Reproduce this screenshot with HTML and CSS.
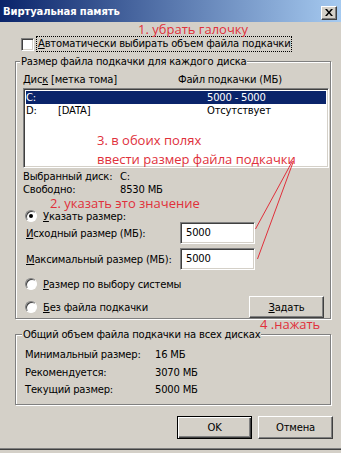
FILE: index.html
```html
<!DOCTYPE html>
<html lang="ru">
<head>
<meta charset="utf-8">
<title>Виртуальная память</title>
<link rel="stylesheet" href="styles.css">
</head>
<body>
<div class="window">
  <div class="titlebar">
    <span class="title">Виртуальная память</span>
    <span class="close"><svg width="8" height="7" viewBox="0 0 8 7"><path d="M0 0h2l2 2.5L6 0h2L5 3.5 8 7H6L4 4.5 2 7H0l3-3.5z" fill="#000"/></svg></span>
  </div>

  <div class="auto-row">
    <span class="checkbox"></span>
    <span class="focus"><u>А</u>втоматически выбирать объем файла подкачки</span>
  </div>

  <div class="group group-disks">
    <span class="legend">Размер файла подкачки для каждого диска</span>
    <div class="cols head"><span class="c1">Дис<u>к</u> [метка тома]</span><span class="c2">Файл подкачки (МБ)</span></div>
    <div class="listbox">
      <div class="lrow sel"><span class="d">C:</span><span class="lab"></span><span class="v">5000 - 5000</span></div>
      <div class="lrow"><span class="d">D:</span><span class="lab">[DATA]</span><span class="v">Отсутствует</span></div>
    </div>
    <div class="info">
      <div class="kv"><span class="k">Выбранный диск:</span><span>C:</span></div>
      <div class="kv"><span class="k">Свободно:</span><span>8530 МБ</span></div>
    </div>
    <div class="radio-row first"><span class="radio on"></span><span><u>У</u>казать размер:</span></div>
    <div class="size-row r1"><span class="size-label"><u>И</u>сходный размер (МБ):</span><span class="input">5000</span></div>
    <div class="size-row r2"><span class="size-label"><u>М</u>аксимальный размер (МБ):</span><span class="input">5000</span></div>
    <div class="radio-row sys"><span class="radio"></span><span><u>Р</u>азмер по выбору системы</span></div>
    <div class="radio-row none">
      <span class="radio"></span><span class="grow"><u>Б</u>ез файла подкачки</span>
      <span class="btn set"><u>З</u>адать</span>
    </div>
  </div>

  <div class="group group-total">
    <span class="legend">Общий объем файла подкачки на всех дисках</span>
    <div class="tv"><span class="tk">Минимальный размер:</span><span>16 МБ</span></div>
    <div class="tv"><span class="tk">Рекомендуется:</span><span>3070 МБ</span></div>
    <div class="tv"><span class="tk">Текущий размер:</span><span>5000 МБ</span></div>
  </div>

  <div class="buttons">
    <span class="btn default">OK</span>
    <span class="btn">Отмена</span>
  </div>
  <div class="frame-bottom"></div>

  <span class="note n1">1. убрать галочку</span>
  <span class="note n3">3. в обоих полях<br>ввести размер файла подкачки</span>
  <span class="note n2">2. указать это значение</span>
  <span class="note n4">4 .нажать</span>
  <svg class="lines" width="341" height="453" viewBox="0 0 341 453">
    <line x1="292.5" y1="161" x2="255.5" y2="229" stroke="#e0303b" stroke-width="1"/>
    <line x1="293.5" y1="161" x2="257.5" y2="259" stroke="#e0303b" stroke-width="1"/>
  </svg>
</div>
</body>
</html>
```

FILE: styles.css
```css
* { box-sizing: border-box; }
html, body { margin: 0; padding: 0; }
body {
  width: 341px;
  height: 453px;
  overflow: hidden;
  background: #d4d0c8;
  font-family: "DejaVu Sans", Tahoma, sans-serif;
  font-size: 10px;
  letter-spacing: -0.2px;
  color: #000;
}
u { text-decoration: underline; text-underline-offset: 1px; }
.window {
  position: relative;
  width: 341px;
  height: 453px;
  display: flex;
  flex-direction: column;
}
.titlebar {
  height: 22px;
  background: linear-gradient(to right, #0a246a, #a6caf0);
  display: flex;
  align-items: center;
  justify-content: space-between;
  padding: 0 4px 0 3px;
}
.title {
  color: #fff;
  font-weight: bold;
  font-size: 10px;
  letter-spacing: -0.1px;
}
.close {
  width: 16px;
  height: 14px;
  margin-top: 3px;
  background: #d4d0c8;
  border: 1px solid;
  border-color: #fff #404040 #404040 #fff;
  box-shadow: inset -1px -1px 0 #808080;
  display: flex;
  align-items: center;
  justify-content: center;
}
.auto-row {
  margin-top: 14px;
  height: 16px;
  padding-left: 21px;
  display: flex;
  align-items: center;
}
.checkbox {
  width: 13px;
  height: 13px;
  background: #fff;
  border: 1px solid;
  border-color: #808080 #fff #fff #808080;
  box-shadow: inset 1px 1px 0 #404040, inset -1px -1px 0 #d4d0c8;
}
.focus {
  margin-left: 2px;
  height: 16px;
  line-height: 14px;
  padding: 0 1px;
  border: 1px dotted #000;
}
.group {
  margin-left: 15px;
  width: 316px;
  border: 1px solid #808080;
  box-shadow: inset 1px 1px 0 #fff, 1px 1px 0 #fff;
  display: flex;
  flex-direction: column;
  padding-left: 7px;
}
.legend {
  align-self: flex-start;
  margin: -7px 0 0 -3px;
  padding: 0 1px;
  line-height: 13px;
  background: #d4d0c8;
}
.group-disks {
  margin-top: 9px;
  height: 258px;
}
.cols {
  display: flex;
  line-height: 13px;
}
.head { margin-top: 5px; }
.c1 { width: 155px; }
.listbox {
  margin-top: 2px;
  width: 306px;
  height: 80px;
  background: #fff;
  border: 1px solid;
  border-color: #808080 #fff #fff #808080;
  box-shadow: inset 1px 1px 0 #404040, inset -1px -1px 0 #d4d0c8;
  padding: 2px 2px;
}
.lrow {
  height: 13px;
  line-height: 13px;
  display: flex;
  padding-left: 0;
}
.lrow.sel { background: #0a246a; color: #fff; }
.lrow .d { width: 32px; }
.lrow .lab { width: 149px; }
.info { margin-top: 3px; }
.kv { display: flex; line-height: 12px; height: 12px; }
.kv + .kv { margin-top: 1px; }
.kv .k { width: 97px; }
.radio-row {
  display: flex;
  align-items: center;
  height: 14px;
  padding-left: 2px;
}
.radio-row.first { margin-top: 13px; }
.radio {
  width: 12px;
  height: 12px;
  border-radius: 50%;
  background: #fff;
  border: 1px solid;
  border-color: #808080 #fff #fff #808080;
  box-shadow: inset 1px 1px 0 #404040;
  margin-right: 6px;
  display: flex;
  align-items: center;
  justify-content: center;
}
.radio.on::after {
  content: "";
  width: 4px;
  height: 4px;
  border-radius: 50%;
  background: #000;
}
.size-row {
  display: flex;
  align-items: center;
  height: 22px;
  padding-left: 3px;
}
.size-row.r1 { margin-top: -1px; }
.size-row.r2 { margin-top: 4px; }
.size-label { width: 154px; }
.input {
  width: 75px;
  height: 22px;
  background: #fff;
  border: 1px solid;
  border-color: #808080 #fff #fff #808080;
  box-shadow: inset 1px 1px 0 #404040, inset -1px -1px 0 #d4d0c8;
  padding: 0 0 0 5px;
  line-height: 19px;
}
.radio-row.sys { margin-top: 7px; }
.radio-row.none { margin-top: 5px; height: 22px; }
.grow { flex: 1; }
.btn {
  width: 75px;
  height: 23px;
  display: flex;
  align-items: center;
  justify-content: center;
  background: #d4d0c8;
  border: 1px solid;
  border-color: #fff #404040 #404040 #fff;
  box-shadow: inset -1px -1px 0 #808080;
}
.btn.set { margin-right: 6px; height: 22px; }
.group-total {
  margin-top: 15px;
  height: 71px;
  padding-left: 9px;
}
.tv { display: flex; line-height: 13px; height: 17.5px; }
.group-total .legend + .tv { margin-top: 7px; }
.tk { width: 130px; }
.buttons {
  margin-top: 11px;
  display: flex;
  justify-content: flex-end;
  gap: 6px;
  padding-right: 8px;
}
.btn.default {
  border: 1px solid #000;
  box-shadow: inset 1px 1px 0 #fff, inset -1px -1px 0 #404040, inset -2px -2px 0 #808080;
}
.frame-bottom {
  margin-top: 9px;
  height: 2px;
  border-top: 1px solid #808080;
  border-bottom: 1px solid #404040;
}
.note {
  position: absolute;
  color: #e0303b;
  font-family: "Open Sans", "DejaVu Sans", sans-serif;
  font-size: 13px;
  line-height: 14px;
  letter-spacing: 0;
  white-space: nowrap;
}
.n1 { left: 138px; top: 22px; }
.n2 { left: 50px; top: 197px; line-height: 13px; }
.n3 { left: 97px; top: 131px; line-height: 19px; }
.n4 { left: 260px; top: 317px; }
.lines {
  position: absolute;
  left: 0;
  top: 0;
  pointer-events: none;
}
```
